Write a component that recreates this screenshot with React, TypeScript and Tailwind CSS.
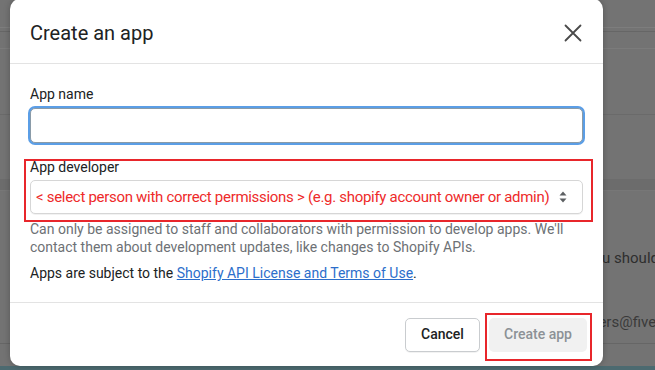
import React from 'react';

const BackgroundPage: React.FC = () => {
  // the dimmed Shopify admin page behind the modal
  return (
    <div className="absolute inset-0 flex flex-col bg-[#737373]">
      <div className="h-[27px]" />
      <div className="h-[1px] bg-[#7d7d7d]" />
      <div className="h-[3px]" />
      <div className="h-[1px] bg-[#666]" />
      <div className="h-[16px]" />
      <div className="h-[1px] bg-[#7b7b7b]" />
      <div className="h-[65px]" />
      <div className="h-[1px] bg-[#6a6a6a]" />
      <div className="h-[64px]" />
      <div className="h-[12px] bg-[#6c6c6c] border-b border-[#777]" />
      <div className="flex h-[80px] items-end justify-end">
        <span className="mb-[2px] mr-[-4px] text-[15px] text-[#2e2e2e] [font-family:Roboto,'Liberation_Sans',sans-serif]">
          you should
        </span>
      </div>
      <div className="h-[40px]" />
      <div className="flex h-[22px] items-center justify-end">
        <span className="mr-[-6px] text-[15px] text-[#3a3a3a] [font-family:Roboto,'Liberation_Sans',sans-serif]">
          users@fivet
        </span>
      </div>
      <div className="h-[10px]" />
      <div className="h-[1px] bg-[#666]" />
      <div className="flex-1" />
      <div className="h-[4px] bg-[#4c6a70]" />
    </div>
  );
};

const App: React.FC = () => {
  return (
    <div className="relative h-[370px] w-[655px] overflow-hidden [font-family:Roboto,'Liberation_Sans',sans-serif]">
      <BackgroundPage />

      <div className="absolute left-[10px] top-[-1px] flex h-[367px] w-[593px] flex-col rounded-[10px] bg-white shadow-[0_0_6px_rgba(0,0,0,0.25)]">
        {/* header */}
        <div className="flex h-[65px] shrink-0 items-center justify-between border-b border-[#e3e3e3] pl-[20px] pr-[18px] pt-[3px]">
          <h2 className="text-[20px] font-normal text-[#202223]">Create an app</h2>
          <button className="flex h-[24px] w-[24px] items-center justify-center text-[#4a4a4a]">
            <svg width="18" height="18" viewBox="0 0 18 18" fill="none" stroke="currentColor" strokeWidth="1.8" strokeLinecap="round">
              <path d="M1.5 1.5 L16.5 16.5 M16.5 1.5 L1.5 16.5" />
            </svg>
          </button>
        </div>

        {/* body */}
        <div className="relative flex flex-1 flex-col px-[20px] pt-[21px]">
          <label className="text-[14px] leading-[18px] text-[#202223]">App name</label>
          <input
            type="text"
            className="mt-[5px] h-[35px] w-full rounded-[5px] border border-[#8a9ba8] bg-white outline-none ring-2 ring-[#5b9ee6]"
          />

          <label className="mt-[15px] text-[14px] leading-[18px] text-[#202223]">App developer</label>
          <div className="mt-[4px] flex h-[34px] w-full items-center justify-between rounded-[5px] border border-[#d6d6d6] bg-white pl-[5px] pr-[14px] shadow-[0_1px_0_rgba(0,0,0,0.05)]">
            <span className="whitespace-nowrap text-[15px] tracking-[-0.3px] text-[#ee2a2a]">
              &lt; select person with correct permissions &gt; (e.g. shopify account owner or admin)
            </span>
            <svg width="10" height="14" viewBox="0 0 10 14" fill="#5c5f62">
              <path d="M5 1.5 L8.5 5.5 H1.5 Z" />
              <path d="M5 12.5 L1.5 8.5 H8.5 Z" />
            </svg>
          </div>

          <p className="mt-[6px] text-[14px] leading-[18px] text-[#6d7175]">
            Can only be assigned to staff and collaborators with permission to develop apps. We'll contact them about development updates, like changes to Shopify APIs.
          </p>

          <p className="mt-[8px] text-[14px] leading-[18px] text-[#202223]">
            Apps are subject to the{' '}
            <a className="text-[#2c6ecb] underline">Shopify API License and Terms of Use</a>.
          </p>

          {/* annotation outline */}
          <div className="absolute left-[14px] top-[95px] h-[63px] w-[569px] border-2 border-[#e8262b]" />
        </div>

        {/* footer */}
        <div className="relative flex h-[64px] shrink-0 items-center justify-end gap-[9px] border-t border-[#e3e3e3] pr-[16px]">
          <button className="h-[34px] w-[75px] rounded-[5px] border border-[#c9cccf] bg-white text-[14px] font-medium text-[#202223] shadow-[0_1px_0_rgba(0,0,0,0.05)]">
            Cancel
          </button>
          <button className="h-[34px] w-[98px] rounded-[5px] bg-[#f1f1f1] text-[14px] font-medium text-[#8c9196]">
            Create app
          </button>
          <div className="absolute right-[11px] top-[10px] h-[48px] w-[107px] border-2 border-[#e8262b]" />
        </div>
      </div>
    </div>
  );
};

export default App;
